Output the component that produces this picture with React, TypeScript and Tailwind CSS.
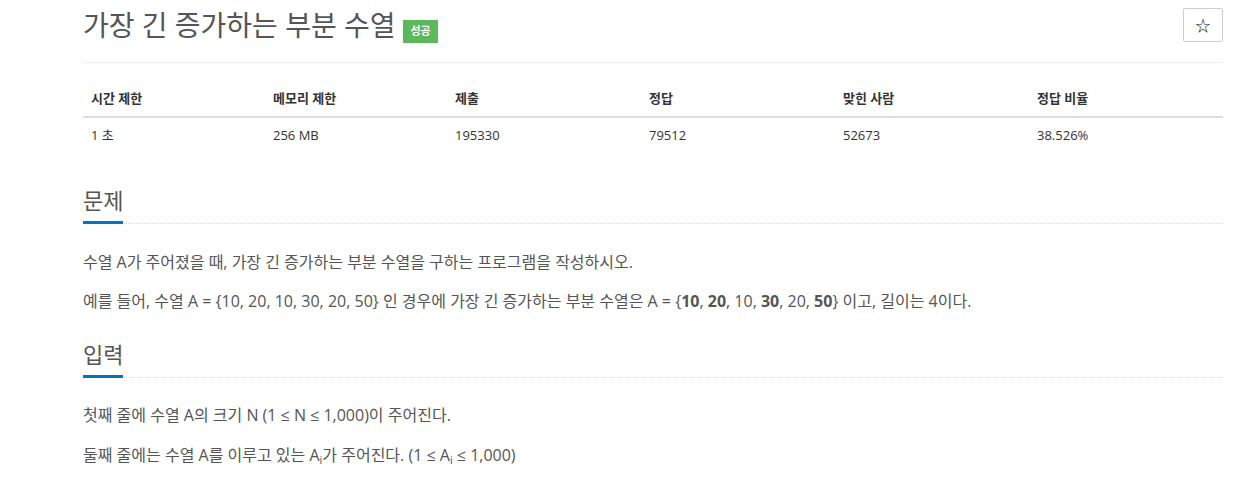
import React from "react";

const cols = [
  { head: "시간 제한", value: "1 초" },
  { head: "메모리 제한", value: "256 MB" },
  { head: "제출", value: "195330" },
  { head: "정답", value: "79512" },
  { head: "맞힌 사람", value: "52673" },
  { head: "정답 비율", value: "38.526%" },
];

function Headline({ children }: { children: React.ReactNode }) {
  return (
    <div className="flex border-b border-dotted border-[#ddd]">
      <h2 className="text-[22px] leading-[26px] pb-[8px] border-b-[3px] border-[#0076c0] mb-[-1px] text-[#555] font-normal">
        {children}
      </h2>
    </div>
  );
}

export default function App() {
  return (
    <div
      className="bg-white min-h-screen text-[#555]"
      style={{ fontFamily: "'Open Sans', 'Noto Sans CJK KR', sans-serif" }}
    >
      <div className="ml-[83px] w-[1140px]">
        {/* title */}
        <div className="flex justify-between items-start h-[62px]">
          <h1 className="flex items-start mt-[7px]">
            <span className="text-[28px] leading-[36px] text-[#555] font-normal">
              가장 긴 증가하는 부분 수열
            </span>
            <span className="ml-[8px] mt-[13px] h-[23px] px-[7px] flex items-center bg-[#5cb85c] text-white text-[11px] font-bold">
              성공
            </span>
          </h1>
          <button className="mt-[8px] w-[40px] h-[34px] border border-[#ccc] rounded-[2px] flex items-center justify-center text-[#222] text-[15px]">
            ☆
          </button>
        </div>
        <div className="border-t border-[#eee]" />

        {/* info table */}
        <div className="mt-[19px] text-[13px]">
          <div className="grid grid-cols-[182px_182px_194px_194px_194px_194px] border-b-2 border-[#ddd]">
            {cols.map((c) => (
              <div key={c.head} className="px-[8px] h-[34px] flex items-center font-bold text-[#333]">
                {c.head}
              </div>
            ))}
          </div>
          <div className="grid grid-cols-[182px_182px_194px_194px_194px_194px]">
            {cols.map((c) => (
              <div key={c.head} className="px-[8px] h-[36px] flex items-center text-[#333]">
                {c.value}
              </div>
            ))}
          </div>
        </div>

        {/* 문제 */}
        <section className="mt-[33px]">
          <Headline>문제</Headline>
          <div className="mt-[25px] text-[16px] leading-[26px]">
            <p className="mb-[13px]">수열 A가 주어졌을 때, 가장 긴 증가하는 부분 수열을 구하는 프로그램을 작성하시오.</p>
            <p>
              예를 들어, 수열 A = {"{"}10, 20, 10, 30, 20, 50{"}"} 인 경우에 가장 긴 증가하는 부분 수열은 A = {"{"}
              <b>10</b>, <b>20</b>, 10, <b>30</b>, 20, <b>50</b>
              {"}"} 이고, 길이는 4이다.
            </p>
          </div>
        </section>

        {/* 입력 */}
        <section className="mt-[27px]">
          <Headline>입력</Headline>
          <div className="mt-[24px] text-[16px] leading-[26px]">
            <p className="mb-[14px]">첫째 줄에 수열 A의 크기 N (1 ≤ N ≤ 1,000)이 주어진다.</p>
            <p>
              둘째 줄에는 수열 A를 이루고 있는 A<sub className="text-[11px]">i</sub>가 주어진다. (1 ≤ A
              <sub className="text-[11px]">i</sub> ≤ 1,000)
            </p>
          </div>
        </section>
      </div>
    </div>
  );
}
